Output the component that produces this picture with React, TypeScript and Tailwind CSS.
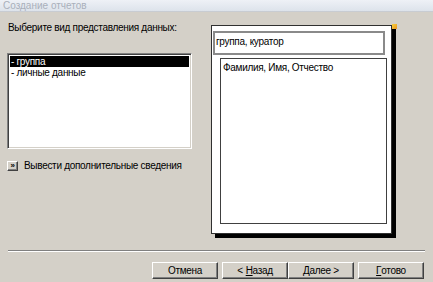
const raised =
  'border border-t-white border-l-white border-r-[#404040] border-b-[#404040] shadow-[inset_-1px_-1px_0_#808080]';

function WizButton({ children }: { children: React.ReactNode }) {
  return (
    <button className={`${raised} bg-[#d4d0c8] h-[17px] w-[66px] text-[10px] leading-[14px] text-black flex items-center justify-center whitespace-nowrap`}>
      {children}
    </button>
  );
}

export default function App() {
  return (
    <div
      className="w-[433px] h-[282px] bg-[#d4d0c8] flex flex-col overflow-hidden text-black whitespace-nowrap tracking-[-0.3px]"
      style={{ fontFamily: '"Liberation Sans", Arial, sans-serif' }}
    >
      {/* title bar */}
      <div className="h-[12px] bg-gradient-to-b from-[#eef1f6] to-[#dde3eb] border-b border-[#c8ccd2] text-[10px] leading-[11px] text-[#a9b0bb] pl-[3px] tracking-normal">
        Создание отчетов
      </div>

      <div className="flex items-start pl-[7px] h-[238px]">
        {/* left column */}
        <div className="w-[185px] flex flex-col">
          <div className="mt-[9px] text-[10px] leading-[13px] pl-[1px]">Выберите вид представления данных:</div>
          <div className="mt-[19px] h-[96px] bg-white border border-t-[#808080] border-l-[#808080] border-r-white border-b-white shadow-[inset_1px_1px_0_#404040,inset_-1px_-1px_0_#d4d0c8] p-[2px]">
            <div className="bg-black text-white text-[10px] leading-[11px] h-[11px] pl-[1px]">- группа</div>
            <div className="text-[10px] leading-[11px] h-[11px] pl-[1px]">- личные данные</div>
          </div>
          <div className="mt-[11px] flex items-center gap-[6px]">
            <div className={`${raised} w-[11px] h-[10px] bg-[#d4d0c8] text-[8px] leading-[6px] flex items-center justify-center font-bold`}>
              »
            </div>
            <span className="text-[10px] leading-[12px]">Вывести дополнительные сведения</span>
          </div>
        </div>

        {/* preview */}
        <div className="ml-[19px] mt-[13px] relative">
          <div className="w-[181px] h-[209px] bg-white border border-[#303030] shadow-[4px_4px_0_#000] pt-[5px] pl-[1px]">
            <div className="w-[172px] h-[24px] border-2 border-[#8a8a8a] text-[10px] leading-[13px] pl-[1px] pt-[2px]">
              группа, куратор
            </div>
            <div className="ml-[7px] mt-[3px] w-[167px] h-[166px] border border-[#404040] text-[10px] leading-[13px] pl-[2px] pt-[2px]">
              Фамилия, Имя, Отчество
            </div>
          </div>
          <div className="absolute -top-[1px] right-[-5px] w-[5px] h-[5px] bg-gradient-to-br from-[#f7d23c] to-[#e9931f]" />
        </div>
      </div>

      {/* separator */}
      <div className="mx-[8px] w-[417px] border-t border-[#808080] border-b border-b-white" />

      {/* buttons */}
      <div className="flex pl-[152px] mt-[10px]">
        <WizButton>Отмена</WizButton>
        <div className="ml-[4px] flex">
          <WizButton>
            &lt; <span className="underline ml-[3px]">Н</span>азад
          </WizButton>
          <WizButton>
            <span className="underline">Д</span>алее &gt;
          </WizButton>
        </div>
        <div className="ml-[4px]">
          <WizButton>
            <span className="underline">Г</span>отово
          </WizButton>
        </div>
      </div>
    </div>
  );
}
